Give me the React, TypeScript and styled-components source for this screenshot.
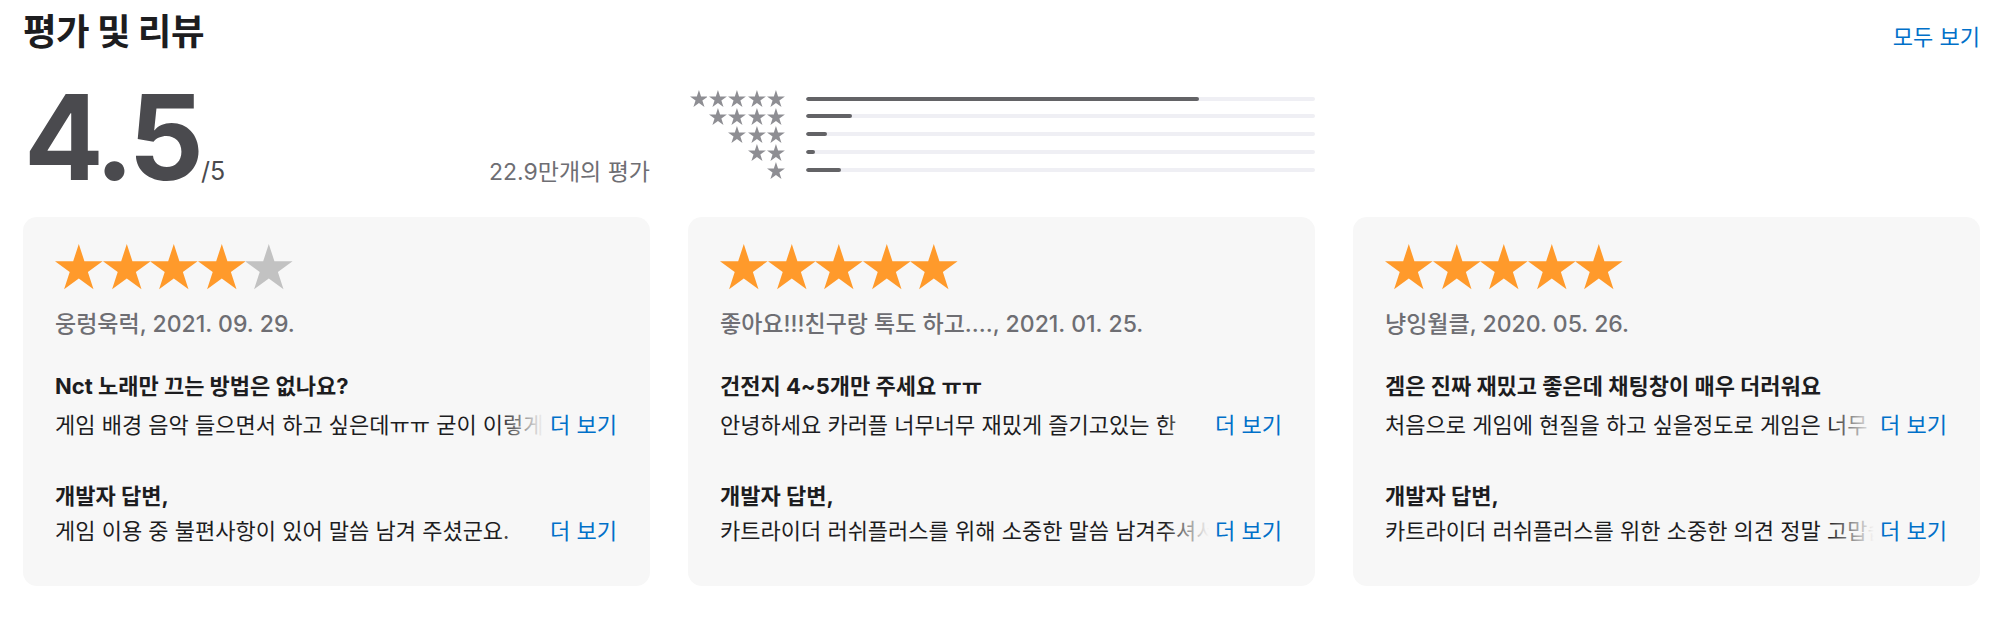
import React from "react";
import styled, { createGlobalStyle } from "styled-components";

const GlobalStyle = createGlobalStyle`
  html, body { margin: 0; padding: 0; background: #ffffff; }
  body {
    font-family: "Inter", "Noto Sans CJK KR", "Noto Sans", sans-serif;
    color: #1d1d1f;
    -webkit-font-smoothing: antialiased;
  }
`;

const Page = styled.div`
  padding: 10px 26px 0 23px;
  width: 2006px;
  box-sizing: border-box;
`;

const Header = styled.div`
  display: flex;
  align-items: baseline;
  justify-content: space-between;
  height: 40px;
`;

const Title = styled.h2`
  margin: 0;
  font-family: "Noto Sans CJK KR", sans-serif;
  font-size: 36.5px;
  font-weight: 700;
  line-height: 40px;
  letter-spacing: -0.5px;
  color: #1d1d1f;
`;

const Link = styled.a`
  color: #0070c9;
  font-size: 22px;
  line-height: 30px;
  text-decoration: none;
  cursor: pointer;
  white-space: nowrap;
`;

const Grid = styled.div<{ $top: number }>`
  display: grid;
  grid-template-columns: repeat(3, 1fr);
  column-gap: 38px;
  margin-top: ${(p) => p.$top}px;
`;

const Average = styled.div`
  display: flex;
  align-items: baseline;
  justify-content: space-between;
  height: 120px;
`;

const Score = styled.div`
  display: flex;
  align-items: baseline;
  margin-left: 1px;
`;

const Big = styled.span`
  font-family: "Inter", "Liberation Sans", sans-serif;
  font-weight: 700;
  font-size: 118px;
  line-height: 120px;
  letter-spacing: -5px;
  color: #4a4a4e;
`;

const OutOf = styled.span`
  font-family: "Inter", "Liberation Sans", sans-serif;
  font-size: 25px;
  color: #4a4a4e;
  margin-left: 2px;
`;

const Count = styled.span`
  font-size: 23px;
  color: #6e6e73;
`;

const Histogram = styled.div`
  display: grid;
  grid-auto-rows: 17.9px;
  padding-top: 12.6px;
`;

const HistRow = styled.div`
  display: grid;
  grid-template-columns: 97px 1fr;
  column-gap: 21px;
  align-items: center;
`;

const StarCell = styled.div`
  display: flex;
  justify-content: flex-end;
  gap: 1.5px;
`;

const Track = styled.div`
  height: 4px;
  border-radius: 2px;
  background: #efeff4;
  overflow: hidden;
`;

const Fill = styled.div`
  height: 100%;
  border-radius: 2px;
  background: #636366;
`;

const Card = styled.div`
  background: #f7f7f7;
  border-radius: 14px;
  padding: 27px 33px 40px 32px;
  display: flex;
  flex-direction: column;
  min-width: 0;
`;

const StarRow = styled.div`
  display: flex;
  height: 46px;
  align-items: center;
`;

const Author = styled.div`
  margin-top: 19px;
  font-size: 23px;
  line-height: 30px;
  font-weight: 500;
  color: #6e6e73;
  white-space: nowrap;
`;

const ReviewTitle = styled.div<{ $top: number }>`
  margin-top: ${(p) => p.$top}px;
  font-size: 22px;
  line-height: 30px;
  font-weight: 700;
  color: #1d1d1f;
  white-space: nowrap;
`;

const Clamp = styled.div<{ $top: number }>`
  position: relative;
  margin-top: ${(p) => p.$top}px;
  font-size: 22px;
  line-height: 30px;
  height: 30px;
  overflow: hidden;
  color: #1d1d1f;
  white-space: pre-line;
`;

const More = styled.span`
  position: absolute;
  right: 0;
  bottom: 0;
  padding-left: 52px;
  line-height: 30px;
  background: linear-gradient(to right, rgba(247, 247, 247, 0) 0, #f7f7f7 46px);
  color: #0070c9;
  cursor: pointer;
`;

function starPoints(cx: number, cy: number, R: number) {
  const r = R * 0.382;
  const pts: string[] = [];
  for (let i = 0; i < 10; i++) {
    const rad = i % 2 === 0 ? R : r;
    const a = ((-90 + i * 36) * Math.PI) / 180;
    pts.push(`${(cx + rad * Math.cos(a)).toFixed(2)},${(cy + rad * Math.sin(a)).toFixed(2)}`);
  }
  return pts.join(" ");
}

const Star: React.FC<{ size: number; color: string }> = ({ size, color }) => {
  const R = size / 1.902;
  const h = R * 1.809;
  return (
    <svg width={size} height={h} viewBox={`0 0 ${size} ${h}`}>
      <polygon points={starPoints(size / 2, R, R)} fill={color} />
    </svg>
  );
};

const Stars: React.FC<{ count: number }> = ({ count }) => (
  <StarRow>
    {[0, 1, 2, 3, 4].map((i) => (
      <Star key={i} size={47.6} color={i < count ? "#ff9a2b" : "#c2c2c2"} />
    ))}
  </StarRow>
);

const hist = [
  { stars: 5, pct: 77.2 },
  { stars: 4, pct: 9 },
  { stars: 3, pct: 4.1 },
  { stars: 2, pct: 1.8 },
  { stars: 1, pct: 6.9 },
];

type Review = {
  stars: number;
  author: string;
  title: string;
  body: string;
  reply: string;
};

const reviews: Review[] = [
  {
    stars: 4,
    author: "웅렁욱럭, 2021. 09. 29.",
    title: "Nct 노래만 끄는 방법은 없나요?",
    body: "게임 배경 음악 들으면서 하고 싶은데ㅠㅠ 굳이 이렇게\n노래를 계속 들어야 하나요? 노래만 끄는 기능도 추가해주세요.",
    reply: "게임 이용 중 불편사항이 있어 말씀 남겨 주셨군요.\n안내해 드리고자 합니다.",
  },
  {
    stars: 5,
    author: "좋아요!!!친구랑 톡도 하고...., 2021. 01. 25.",
    title: "건전지 4~5개만 주세요 ㅠㅠ",
    body: "안녕하세요 카러플 너무너무 재밌게 즐기고있는 한\n유저입니다.",
    reply: "카트라이더 러쉬플러스를 위해 소중한 말씀 남겨주셔서\n감사합니다.",
  },
  {
    stars: 5,
    author: "냥잉월클, 2020. 05. 26.",
    title: "겜은 진짜 재밌고 좋은데 채팅창이 매우 더러워요",
    body: "처음으로 게임에 현질을 하고 싶을정도로 게임은 너무\n재밌어요.",
    reply: "카트라이더 러쉬플러스를 위한 소중한 의견 정말 고맙습니다.",
  },
];

export default function App() {
  return (
    <>
      <GlobalStyle />
      <Page>
        <Header>
          <Title>평가 및 리뷰</Title>
          <Link>모두 보기</Link>
        </Header>
        <Grid $top={27}>
          <Average>
            <Score>
              <Big>4.5</Big>
              <OutOf>/5</OutOf>
            </Score>
            <Count>22.9만개의 평가</Count>
          </Average>
          <Histogram>
            {hist.map((h) => (
              <HistRow key={h.stars}>
                <StarCell>
                  {Array.from({ length: h.stars }).map((_, i) => (
                    <Star key={i} size={17.9} color="#8e8e93" />
                  ))}
                </StarCell>
                <Track>
                  <Fill style={{ width: `${h.pct}%` }} />
                </Track>
              </HistRow>
            ))}
          </Histogram>
        </Grid>
        <Grid $top={20}>
          {reviews.map((r, i) => (
            <Card key={i}>
              <Stars count={r.stars} />
              <Author>{r.author}</Author>
              <ReviewTitle $top={32}>{r.title}</ReviewTitle>
              <Clamp $top={9}>
                {r.body}
                <More>더 보기</More>
              </Clamp>
              <ReviewTitle $top={41}>개발자 답변,</ReviewTitle>
              <Clamp $top={5}>
                {r.reply}
                <More>더 보기</More>
              </Clamp>
            </Card>
          ))}
        </Grid>
      </Page>
    </>
  );
}
